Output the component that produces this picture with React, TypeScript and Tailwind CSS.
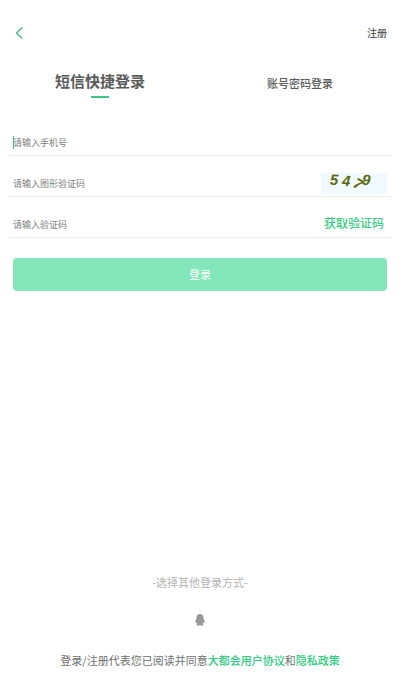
import { ReactNode } from "react";

const CaptchaImage = () => {
  return (
    <svg viewBox="0 0 66 21" className="h-[21px] w-[66px] overflow-visible bg-[#f1faff]" role="img" aria-label="图形验证码">
      <g fill="#5c6b10" fontFamily="Liberation Sans, sans-serif" fontSize="15" fontWeight="700" fontStyle="italic">
        <text x="9" y="12" transform="rotate(2 13 7)">5</text>
        <text x="21" y="13" transform="rotate(4 25 8)">4</text>
        <text x="33" y="16" transform="rotate(28 37 11)">7</text>
        <text x="41" y="12" transform="rotate(4 45 7)">9</text>
      </g>
    </svg>
  );
};

const QQIcon = () => {
  return (
    <svg viewBox="0 0 10 12" className="h-3 w-[10px]" fill="#999999" aria-hidden="true">
      <path d="M5 0C2.700 0 1.500 1.500 1.500 3.500v1C.9 5.300.4 6.400.4 7.700c0 .9.300 1.400.7 1.300.2 0 .3-.2.500-.4.1.5.400.9.700 1.300-.5.200-.9.500-.9.900 0 .6.800.9 1.800.9.800 0 1.500-.2 1.800-.5.300.3 1 .5 1.800.5 1 0 1.800-.3 1.800-.9 0-.4-.4-.7-.9-.9.300-.4.600-.8.700-1.300.2.200.3.400.5.400.4.100.7-.4.700-1.300 0-1.300-.5-2.400-1.100-3.200v-1C8.500 1.500 7.300 0 5 0z" />
    </svg>
  );
};

type FieldProps = {
  id: string;
  label: string;
  type?: string;
  active?: boolean;
  children?: ReactNode;
};

const Field = ({ id, label, type = "text", active = false, children }: FieldProps) => {
  return (
    <div className="flex h-[41px] items-end justify-between border-b border-[#eeeeee] px-[5px]">
      <label htmlFor={id} className="relative flex min-w-0 flex-1 pb-[2px]">
        {/* text cursor */}
        {active && <span className="absolute top-[3px] left-0 h-[13px] w-px bg-[#3cc585]"></span>}
        <input
          id={id}
          type={type}
          placeholder={label}
          aria-label={label}
          className="h-5 w-full bg-transparent text-[9px] leading-5 text-[#555555] caret-[#3cc585] outline-none placeholder:text-[#808080]"
        />
      </label>
      {children}
    </div>
  );
};

const App = () => {
  return (
    <div className="flex min-h-screen flex-col bg-white font-['Noto_Sans_CJK_SC',sans-serif] text-[#5a5a5a]">
      <header className="flex items-center justify-between px-[13px] pt-[23px]">
        <button type="button" aria-label="返回" className="flex h-5 w-5 items-center pl-[2px]">
          <svg viewBox="0 0 8 12" className="h-3 w-2" fill="none" stroke="#3cb982" strokeWidth="1.3">
            <path d="M7.300.6 1.500 6l5.800 5.400" />
          </svg>
        </button>
        <a href="#register" className="text-[10px] leading-5 font-medium">注册</a>
      </header>

      <div className="flex items-start pt-6">
        <button type="button" className="flex flex-1 flex-col items-center">
          <span className="text-[15px] leading-7 font-bold">短信快捷登录</span>
          <span className="mt-px h-[2px] w-[18px] bg-[#3cc585]"></span>
        </button>
        <button type="button" className="flex-1 pt-1 text-[11px] leading-6 font-medium">账号密码登录</button>
      </div>

      <form className="px-2 pt-[17px]" onSubmit={(e) => e.preventDefault()}>
        <Field id="phone" label="请输入手机号" type="tel" active />
        <Field id="captcha" label="请输入图形验证码">
          <button type="button" className="mb-[2px]">
            <CaptchaImage />
          </button>
        </Field>
        <Field id="code" label="请输入验证码">
          <button type="button" className="pr-[3px] pb-1 text-[12px] leading-5 font-medium text-[#3ccb84]">获取验证码</button>
        </Field>
        <div className="px-[5px] pt-5">
          <button type="submit" className="h-[33px] w-full rounded bg-[#83e7bb] text-[11px] text-white">登录</button>
        </div>
      </form>

      <footer className="mt-auto flex flex-col items-center pb-5">
        <p className="text-[11px] leading-5 text-[#b3b3b3]">-选择其他登录方式-</p>
        <button type="button" aria-label="QQ登录" className="mt-[22px]">
          <QQIcon />
        </button>
        <p className="mt-6 text-[11px] leading-5 text-[#707070]">
          登录/注册代表您已阅读并同意
          <a href="#agreement" className="font-medium text-[#2ecb80]">大都会用户协议</a>
          和
          <a href="#privacy" className="font-medium text-[#2ecb80]">隐私政策</a>
        </p>
      </footer>
    </div>
  );
};

export default App;
